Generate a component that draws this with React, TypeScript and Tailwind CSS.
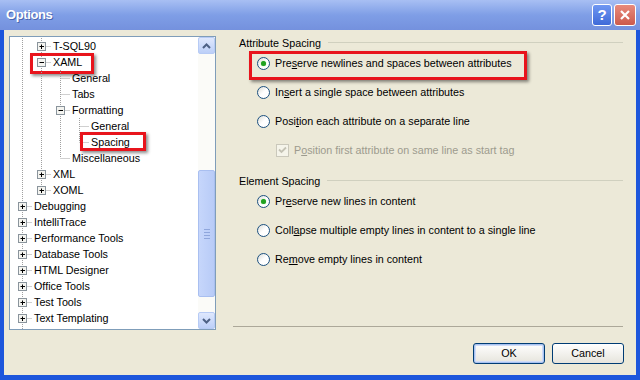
import React from "react";

type Node = {
  label: string;
  guides: boolean[];
  last?: boolean;
  exp?: "+" | "-";
  mark?: boolean;
};

const tree: Node[] = [
  { label: "T-SQL90", guides: [true], exp: "+" },
  { label: "XAML", guides: [true], exp: "-", mark: true },
  { label: "General", guides: [true, true] },
  { label: "Tabs", guides: [true, true] },
  { label: "Formatting", guides: [true, true], exp: "-" },
  { label: "General", guides: [true, true, true] },
  { label: "Spacing", guides: [true, true, true], last: true, mark: true },
  { label: "Miscellaneous", guides: [true, true], last: true },
  { label: "XML", guides: [true], exp: "+" },
  { label: "XOML", guides: [true], exp: "+", last: true },
  { label: "Debugging", guides: [], exp: "+" },
  { label: "IntelliTrace", guides: [], exp: "+" },
  { label: "Performance Tools", guides: [], exp: "+" },
  { label: "Database Tools", guides: [], exp: "+" },
  { label: "HTML Designer", guides: [], exp: "+" },
  { label: "Office Tools", guides: [], exp: "+" },
  { label: "Test Tools", guides: [], exp: "+" },
  { label: "Text Templating", guides: [], exp: "+" },
];

const dot = "#a0a0a0";

function Guide({ on }: { on: boolean }) {
  return (
    <svg width="19" height="16" className="shrink-0">
      {on && <line x1="9.5" y1="0" x2="9.5" y2="16" stroke={dot} strokeDasharray="1 1" />}
    </svg>
  );
}

function Joint({ last, exp }: { last?: boolean; exp?: "+" | "-" }) {
  return (
    <svg width="19" height="16" className="shrink-0">
      <line x1="9.5" y1="0" x2="9.5" y2={last ? 8 : 16} stroke={dot} strokeDasharray="1 1" />
      <line x1="9.5" y1="8.5" x2="19" y2="8.5" stroke={dot} strokeDasharray="1 1" />
      {exp && (
        <g>
          <rect x="5.5" y="4.5" width="8" height="8" fill="#f4f4f0" stroke="#8a949c" />
          <line x1="7.5" y1="8.5" x2="12" y2="8.5" stroke="#000" />
          {exp === "+" && <line x1="9.5" y1="6.5" x2="9.5" y2="11" stroke="#000" />}
        </g>
      )}
    </svg>
  );
}

function Tree() {
  return (
    <div className="flex h-[294px] w-[207px] shrink-0 border border-[#7f9db9] bg-white">
      <div className="flex-1 overflow-hidden pl-[3px] pt-[1px]">
        {tree.map((n, i) => (
          <div key={i} className="relative flex h-4 items-center">
            {n.guides.map((g, j) => (
              <Guide key={j} on={g} />
            ))}
            <Joint last={n.last} exp={n.exp} />
            <span className="ml-[2px] whitespace-nowrap leading-4">{n.label}</span>
            {n.mark && n.label === "XAML" && (
              <span className="absolute left-[17px] top-[-1px] h-[21px] w-[64px] border-[3px] border-[#e8141c] shadow-[2px_2px_3px_rgba(0,0,0,0.45)]" />
            )}
            {n.mark && n.label === "Spacing" && (
              <span className="absolute left-[67px] top-[-2px] h-[19px] w-[66px] border-[3px] border-[#e8141c] shadow-[2px_2px_3px_rgba(0,0,0,0.45)]" />
            )}
          </div>
        ))}
        {/* next row, scrolled out of view */}
        <div className="flex h-4">
          <Guide on />
        </div>
      </div>
      <Scrollbar />
    </div>
  );
}

function Chevron({ up }: { up?: boolean }) {
  return (
    <svg width="9" height="6" viewBox="0 0 9 6">
      <path
        d={up ? "M1 5 L4.5 1.5 L8 5" : "M1 1 L4.5 4.5 L8 1"}
        fill="none"
        stroke="#4d6185"
        strokeWidth="2"
      />
    </svg>
  );
}

function Scrollbar() {
  return (
    <div className="flex w-[17px] shrink-0 flex-col bg-[#fbfbf8]">
      <div className="flex h-[17px] items-center justify-center rounded-[2px] border border-[#b7cbf5] bg-gradient-to-b from-[#dfe8fd] to-[#bccff8]">
        <Chevron up />
      </div>
      <div className="h-[116px]" />
      <div className="flex h-[127px] flex-col items-center justify-center gap-[2px] rounded-[2px] border border-[#a9bff0] bg-gradient-to-r from-[#c6d6fb] to-[#b8cbf7]">
        <span className="h-px w-[6px] bg-[#8fa6dc]" />
        <span className="h-px w-[6px] bg-[#8fa6dc]" />
        <span className="h-px w-[6px] bg-[#8fa6dc]" />
        <span className="h-px w-[6px] bg-[#8fa6dc]" />
      </div>
      <div className="flex-1" />
      <div className="flex h-[17px] items-center justify-center rounded-[2px] border border-[#b7cbf5] bg-gradient-to-b from-[#dfe8fd] to-[#bccff8]">
        <Chevron />
      </div>
    </div>
  );
}

function Radio({ on }: { on?: boolean }) {
  return (
    <span className="flex h-[13px] w-[13px] shrink-0 items-center justify-center rounded-full border border-[#1c5180] bg-gradient-to-br from-[#dcdcd6] via-white to-white">
      {on && <span className="h-[5px] w-[5px] rounded-full bg-[#21a121] shadow-[0_0_1px_#5cd65c]" />}
    </span>
  );
}

function Header({ text }: { text: string }) {
  return (
    <div className="flex h-[14px] items-center pl-[6px]">
      <span className="whitespace-nowrap">{text}</span>
      <span className="ml-[7px] h-[2px] flex-1 border-t border-[#d0d0bf] border-b-white" />
    </div>
  );
}

function Option({ on, children, mark }: { on?: boolean; children: React.ReactNode; mark?: boolean }) {
  return (
    <div className="relative flex h-[29px] items-center pl-[24px]">
      <Radio on={on} />
      <span className="ml-[5px] whitespace-nowrap">{children}</span>
      {mark && (
        <span className="absolute left-[16px] top-[2px] h-[29px] w-[278px] border-[3px] border-[#e8141c] shadow-[2px_2px_3px_rgba(0,0,0,0.45)]" />
      )}
    </div>
  );
}

export default function App() {
  return (
    <div className="flex h-[380px] w-[640px] flex-col overflow-hidden bg-[#1d56dc] text-[10.75px] text-black [font-family:'Liberation_Sans',sans-serif]">
      {/* title bar */}
      <div className="flex h-[30px] items-center bg-gradient-to-b from-[#a8bff3] via-[#7f9ee6] to-[#7491de] pl-[6px] pr-[4px]">
        <span className="text-[13px] font-bold tracking-[-0.4px] text-white [text-shadow:1px_1px_0_#4a66b0]">
          Options
        </span>
        <div className="ml-auto flex gap-[2px]">
          <div className="flex h-[22px] w-[20px] items-center justify-center rounded-[3px] border border-white bg-gradient-to-b from-[#6f97f2] to-[#3f6ad8] text-[15px] font-bold text-white">
            ?
          </div>
          <div className="flex h-[22px] w-[22px] items-center justify-center rounded-[3px] border border-white bg-gradient-to-b from-[#e88a7c] to-[#cc5a4c]">
            <svg width="12" height="12" viewBox="0 0 12 12">
              <path d="M2 2 L10 10 M10 2 L2 10" stroke="#fff" strokeWidth="2.2" />
            </svg>
          </div>
        </div>
      </div>

      {/* body */}
      <div className="mx-[4px] mb-[5px] flex flex-1 flex-col bg-[#ece9d8]">
        <div className="flex pl-[5px] pt-[6px]">
          <Tree />
          <div className="ml-[17px] flex h-[294px] w-[390px] flex-col">
            <Header text="Attribute Spacing" />
            <div className="mt-[-1px]">
              <Option on mark>
                Pre<u>s</u>erve newlines and spaces between attributes
              </Option>
              <Option>
                In<u>s</u>ert a single space between attributes
              </Option>
              <Option>
                Posi<u>t</u>ion each attribute on a separate line
              </Option>
              <div className="flex h-[28px] items-center pl-[43px] text-[#9d9b8e]">
                <span className="flex h-[13px] w-[13px] items-center justify-center border border-[#cac8bb] bg-[#f5f4ea]">
                  <svg width="9" height="8" viewBox="0 0 9 8">
                    <path d="M1 3.5 L3.5 6 L8 1.5" fill="none" stroke="#c4c2b4" strokeWidth="1.8" />
                  </svg>
                </span>
                <span className="ml-[5px] whitespace-nowrap">
                  P<u>o</u>sition first attribute on same line as start tag
                </span>
              </div>
            </div>
            <div className="mt-[10px]">
              <Header text="Element Spacing" />
            </div>
            <div className="mt-[-1px]">
              <Option on>
                Pr<u>e</u>serve new lines in content
              </Option>
              <Option>
                Coll<u>a</u>pse multiple empty lines in content to a single line
              </Option>
              <Option>
                Re<u>m</u>ove empty lines in content
              </Option>
            </div>
            <div className="mb-[2px] mt-auto h-[2px] border-t border-[#aca899] border-b-white" />
          </div>
        </div>

        <div className="mt-[13px] flex justify-end gap-[7px] pr-[12px]">
          <button className="h-[21px] w-[72px] rounded-[3px] border border-[#003c74] bg-gradient-to-b from-white to-[#e6e4dc] shadow-[inset_0_0_0_1px_#a8c2f0,inset_0_0_0_2px_#cfdcf8]">
            OK
          </button>
          <button className="h-[21px] w-[72px] rounded-[3px] border border-[#003c74] bg-gradient-to-b from-white to-[#e6e4dc]">
            Cancel
          </button>
        </div>
      </div>
    </div>
  );
}
